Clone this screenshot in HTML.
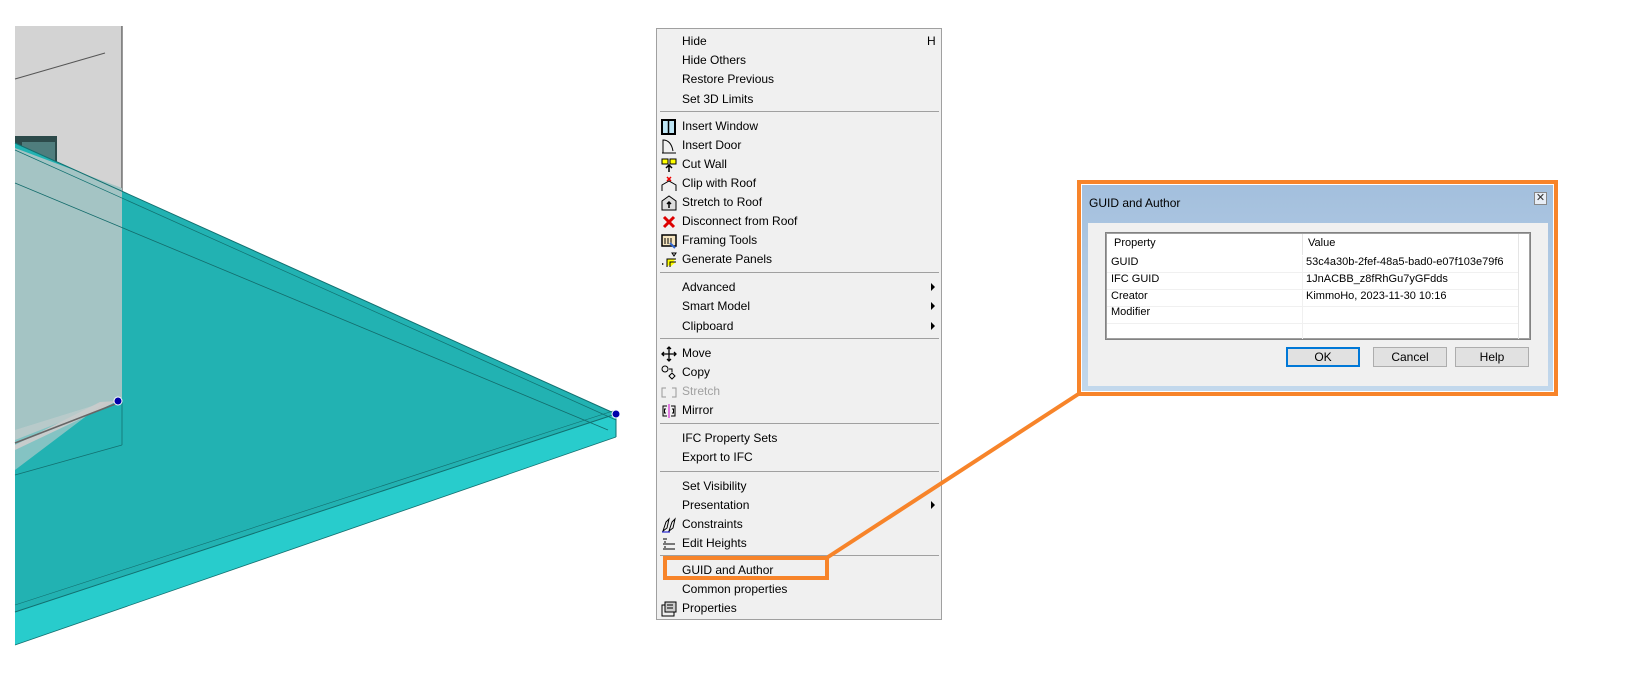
<!DOCTYPE html>
<html><head><meta charset="utf-8"><style>
body{margin:0;width:1640px;height:697px;background:#fff;position:relative;overflow:hidden;font-family:"Liberation Sans",sans-serif;}
.menu{position:absolute;left:656px;top:28px;width:286px;height:592px;background:#f0f0f0;border:1px solid #a0a0a0;box-sizing:border-box;}
.it{position:absolute;left:25px;font-size:12px;color:#000;line-height:14px;}
.dis{color:#a0a0a0}
.sep{position:absolute;left:3px;right:2px;height:1px;background:#a0a0a0;}
.arr{position:absolute;right:6px;width:0;height:0;border-left:4px solid #000;border-top:4px solid transparent;border-bottom:4px solid transparent;}
.ic{position:absolute;left:4px;width:16px;height:16px;}
.dlg{position:absolute;left:1077px;top:180px;width:481px;height:216px;border:4px solid #f7842a;box-sizing:border-box;}
.dlgin{position:absolute;left:1px;top:1px;right:1px;bottom:1px;background:linear-gradient(#a3bfdd,#c3d8ec);}
.client{position:absolute;left:1088px;top:223px;width:460px;height:163px;background:#f0f0f0;}
.list{position:absolute;left:1105px;top:232px;width:426px;height:108px;background:#fff;border:1px solid #828282;box-shadow:inset 0 0 0 1px #a0a0a0;box-sizing:border-box;}
.t{position:absolute;font-size:11px;color:#000;}
.btn{position:absolute;top:347px;width:74px;height:20px;background:#e1e1e1;border:1px solid #adadad;box-sizing:border-box;font-size:12px;text-align:center;line-height:18px;}
</style></head><body>
<svg width="640" height="697" style="position:absolute;left:0;top:0">
<rect x="15" y="26" width="107" height="380" fill="#d3d3d3"/>
<line x1="15" y1="79" x2="105" y2="53" stroke="#555" stroke-width="1"/>
<line x1="122" y1="26" x2="122" y2="400" stroke="#333" stroke-width="1"/>
<rect x="15" y="136" width="42" height="60" fill="#2c4a4a"/>
<rect x="22" y="142" width="33" height="48" fill="#4f7d7d"/>
<polygon points="15,143 616,414 15,612" fill="#22b2b2"/>
<polygon points="15,612 616,414 616,437 15,645" fill="#28cccc"/>
<polygon points="15,148 122,188 122,398 15,440" fill="#a4c4c4"/>
<polygon points="15,445 100,402 118,401 15,450" fill="#c9c9c9"/>
<polygon points="15,430 105,402 15,470" fill="#c6cfcf" opacity="0.6"/>
<line x1="15" y1="143" x2="616" y2="414" stroke="#127070" stroke-width="1"/>
<line x1="15" y1="150" x2="616" y2="420" stroke="#127070" stroke-width="0.7"/>
<line x1="15" y1="183" x2="608" y2="430" stroke="#136b6b" stroke-width="0.8"/>
<line x1="15" y1="612" x2="616" y2="414" stroke="#127070" stroke-width="1"/>
<line x1="15" y1="605" x2="616" y2="410" stroke="#127070" stroke-width="0.6"/>
<line x1="15" y1="645" x2="616" y2="437" stroke="#127070" stroke-width="0.8"/>
<line x1="616" y1="414" x2="616" y2="437" stroke="#127070"/>
<line x1="15" y1="475" x2="122" y2="445" stroke="#127070" stroke-width="0.8"/>
<line x1="122" y1="400" x2="122" y2="445" stroke="#127070" stroke-width="0.8"/>
<line x1="15" y1="443" x2="118" y2="403" stroke="#666" stroke-width="1.5"/>
<circle cx="118" cy="401" r="4" fill="#0000aa" stroke="#fff"/>
<circle cx="616" cy="414" r="4" fill="#0000aa" stroke="#fff"/>
</svg>
<div class="menu">
<div class="it" style="top:5px">Hide</div><div class="it" style="left:270px;top:5px">H</div>
<div class="it" style="top:24px">Hide Others</div>
<div class="it" style="top:43px">Restore Previous</div>
<div class="it" style="top:63px">Set 3D Limits</div>
<div class="sep" style="top:82px"></div>
<svg class="ic" style="top:90px"><rect x="1" y="1" width="13" height="14" fill="#bfe6f5" stroke="#000" stroke-width="2"/><line x1="7.5" y1="1" x2="7.5" y2="15" stroke="#000" stroke-width="1.5"/></svg>
<div class="it" style="top:90px">Insert Window</div>
<svg class="ic" style="top:109px"><path d="M2 15V2Q10 2 12 13" fill="none" stroke="#000"/><path d="M1 15H15" stroke="#000"/></svg>
<div class="it" style="top:109px">Insert Door</div>
<svg class="ic" style="top:128px"><rect x="1" y="2" width="6" height="5" fill="#ff0" stroke="#000"/><rect x="9" y="2" width="6" height="5" fill="#ff0" stroke="#000"/><path d="M8 15V9M5 11L8 8 11 11" stroke="#000" fill="none" stroke-width="1.5"/></svg>
<div class="it" style="top:128px">Cut Wall</div>
<svg class="ic" style="top:147px"><path d="M1 15V9L8 5 15 9V15" fill="none" stroke="#000"/><path d="M6 1L10 5M10 1L6 5" stroke="#e00" stroke-width="1.5"/></svg>
<div class="it" style="top:147px">Clip with Roof</div>
<svg class="ic" style="top:166px"><path d="M1 15V6L8 1 15 6V15Z" fill="#ddd" stroke="#000"/><path d="M8 13V7M6 9L8 7 10 9" stroke="#000" stroke-width="1.5" fill="none"/></svg>
<div class="it" style="top:166px">Stretch to Roof</div>
<svg class="ic" style="top:185px"><path d="M3 3L13 13M13 3L3 13" stroke="#d00" stroke-width="3"/></svg>
<div class="it" style="top:185px">Disconnect from Roof</div>
<svg class="ic" style="top:204px"><rect x="1" y="2" width="14" height="11" fill="#f5e5c0" stroke="#000" stroke-width="1.5"/><path d="M4 5V11M7 5V11M10 5V11" stroke="#000"/><path d="M9 10L14 15" stroke="#36c" stroke-width="2"/></svg>
<div class="it" style="top:204px">Framing Tools</div>
<svg class="ic" style="top:223px"><path d="M6 15V7H15M9 15V10H15" fill="#ff0" stroke="#000"/><path d="M1 11L3 12 1 13Z" fill="#000"/><path d="M11 1H15L13 4Z" stroke="#000" fill="none"/></svg>
<div class="it" style="top:223px">Generate Panels</div>
<div class="sep" style="top:243px"></div>
<div class="it" style="top:251px">Advanced</div><div class="arr" style="top:254px"></div>
<div class="it" style="top:270px">Smart Model</div><div class="arr" style="top:273px"></div>
<div class="it" style="top:290px">Clipboard</div><div class="arr" style="top:293px"></div>
<div class="sep" style="top:309px"></div>
<svg class="ic" style="top:317px"><path d="M8 1V15M1 8H15M6 3L8 1 10 3M6 13L8 15 10 13M3 6L1 8 3 10M13 6L15 8 13 10" stroke="#000" fill="none" stroke-width="1.3"/></svg>
<div class="it" style="top:317px">Move</div>
<svg class="ic" style="top:336px"><circle cx="4" cy="4" r="3" fill="none" stroke="#000"/><path d="M11 8L14 11 11 14 8 11Z" fill="none" stroke="#000"/><path d="M8 4H11V7" stroke="#000" fill="none"/></svg>
<div class="it" style="top:336px">Copy</div>
<svg class="ic" style="top:355px"><path d="M5 4H1V13H5M11 4H15V13H11" stroke="#999" fill="none"/></svg>
<div class="it dis" style="top:355px">Stretch</div>
<svg class="ic" style="top:374px"><path d="M6 3H2V13H6M5 6H3.5V10H5M10 3H14V13H10M11 6H12.5V10H11" stroke="#000" fill="none"/><path d="M8 1V15" stroke="#c0c"/></svg>
<div class="it" style="top:374px">Mirror</div>
<div class="sep" style="top:394px"></div>
<div class="it" style="top:402px">IFC Property Sets</div>
<div class="it" style="top:421px">Export to IFC</div>
<div class="sep" style="top:442px"></div>
<div class="it" style="top:450px">Set Visibility</div>
<div class="it" style="top:469px">Presentation</div><div class="arr" style="top:472px"></div>
<svg class="ic" style="top:488px"><path d="M2 14L5 5 8 2 6 11ZM8 14L11 5 14 2 12 11Z" stroke="#000" fill="none"/><path d="M1 15H9" stroke="#00c"/></svg>
<div class="it" style="top:488px">Constraints</div>
<svg class="ic" style="top:507px"><path d="M2 3H6M2 8H14M2 13H14M4 5V7M4 10V12" stroke="#000"/></svg>
<div class="it" style="top:507px">Edit Heights</div>
<div class="sep" style="top:526px"></div>
<div class="it" style="top:534px">GUID and Author</div>
<div class="it" style="top:553px">Common properties</div>
<svg class="ic" style="top:572px"><rect x="1" y="4" width="12" height="11" fill="#eee" stroke="#000"/><rect x="4" y="1" width="11" height="10" fill="#ccc" stroke="#000"/><path d="M6 4H12M6 7H12" stroke="#000"/></svg>
<div class="it" style="top:572px">Properties</div>
</div>
<div style="position:absolute;left:663px;top:556px;width:166px;height:24px;border:4px solid #f7842a;box-sizing:border-box"></div>
<svg width="1640" height="697" style="position:absolute;left:0;top:0;pointer-events:none"><line x1="828" y1="557" x2="1080" y2="393" stroke="#f7842a" stroke-width="4"/></svg>
<div class="dlg"><div class="dlgin"></div></div>
<div class="t" style="left:1089px;top:196px;font-size:12px">GUID and Author</div>
<div style="position:absolute;left:1534px;top:192px;width:13px;height:13px;border:1px solid #888;box-sizing:border-box;background:#e8eef6;font-size:11px;line-height:10px;text-align:center;color:#333">✕</div>
<div class="client"></div>
<div class="list"></div>
<div style="position:absolute;left:1302px;top:234px;width:1px;height:21px;background:#e5e5e5"></div>
<div style="position:absolute;left:1302px;top:256px;width:1px;height:83px;background:#f0f0f0"></div>
<div style="position:absolute;left:1518px;top:234px;width:1px;height:105px;background:#e5e5e5"></div>
<div style="position:absolute;left:1107px;top:272px;width:411px;height:1px;background:#f0f0f0"></div>
<div style="position:absolute;left:1107px;top:289px;width:411px;height:1px;background:#f0f0f0"></div>
<div style="position:absolute;left:1107px;top:306px;width:411px;height:1px;background:#f0f0f0"></div>
<div style="position:absolute;left:1107px;top:323px;width:411px;height:1px;background:#f0f0f0"></div>
<div class="t" style="left:1114px;top:237px">Property</div>
<div class="t" style="left:1308px;top:237px">Value</div>
<div class="t" style="left:1111px;top:256px">GUID</div>
<div class="t" style="left:1306px;top:256px">53c4a30b-2fef-48a5-bad0-e07f103e79f6</div>
<div class="t" style="left:1111px;top:273px">IFC GUID</div>
<div class="t" style="left:1306px;top:273px">1JnACBB_z8fRhGu7yGFdds</div>
<div class="t" style="left:1111px;top:290px">Creator</div>
<div class="t" style="left:1306px;top:290px">KimmoHo, 2023-11-30 10:16</div>
<div class="t" style="left:1111px;top:306px">Modifier</div>
<div class="btn" style="left:1286px;border:2px solid #0078d7;line-height:16px">OK</div>
<div class="btn" style="left:1373px">Cancel</div>
<div class="btn" style="left:1455px">Help</div>
</body></html>
